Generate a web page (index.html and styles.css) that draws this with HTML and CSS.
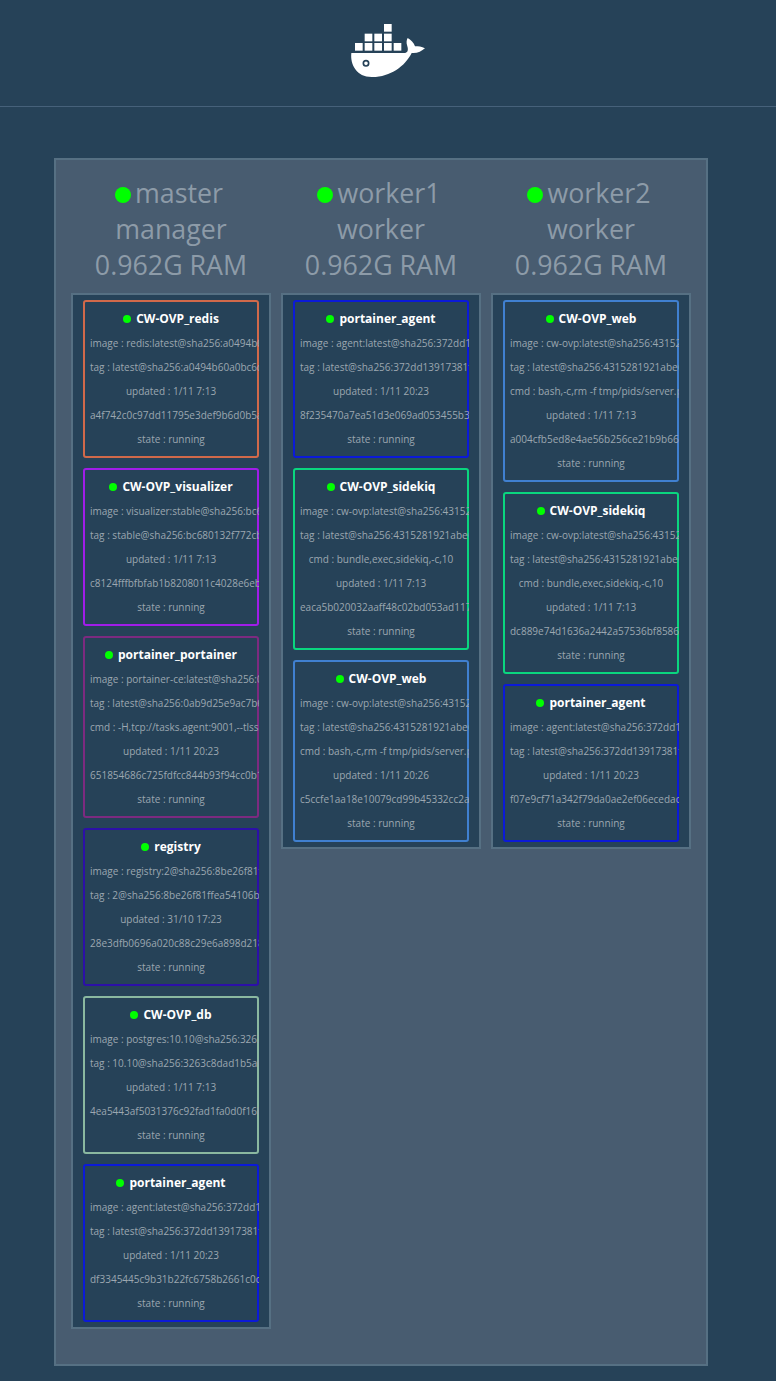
FILE: index.html
```html
<!DOCTYPE html>
<html lang="en">
<head>
    <meta charset="utf-8">
    <title>Visualizer</title>
    <link rel="stylesheet" href="styles.css">
</head>
<body>

    <!-- Logo -->
    <header class="top-bar">
        <svg class="logo" viewBox="150 70 228 165" width="76" height="55">
            <g fill="#fff">
                <rect x="252" y="73" width="23" height="23"/>
                <rect x="194" y="102" width="23" height="23"/>
                <rect x="223" y="102" width="23" height="23"/>
                <rect x="252" y="102" width="23" height="23"/>
                <rect x="165" y="130" width="23" height="23"/>
                <rect x="194" y="130" width="23" height="23"/>
                <rect x="223" y="130" width="23" height="23"/>
                <rect x="252" y="130" width="23" height="23"/>
                <rect x="281" y="130" width="23" height="23"/>
                <path d="M154 160 L316 160 C322 158 326 153 322 140 C318 128 320 120 323 115 C332 120 342 130 345 140 C355 140 365 141 375 146 C365 155 350 162 335 160 C315 200 270 233 215 232 C170 232 150 195 154 160 Z"/>
            </g>
            <circle cx="198" cy="191" r="8" fill="#fff" stroke="#264258" stroke-width="5"/>
        </svg>
    </header>

    <main class="cluster">

        <!-- master -->
        <section class="node">
            <h2 class="node-title"><span class="node-name"><span class="dot-large"></span>master</span><br>manager<br>0.962G RAM</h2>
            <ul class="service-list">
                <li class="service c-redis">
                    <div class="service-name"><span class="dot"></span>CW-OVP_redis</div>
                    <div class="service-row">image : redis:latest@sha256:a0494b60a0bc6de161d26dc</div>
                    <div class="service-row">tag : latest@sha256:a0494b60a0bc6de161d26dc2d2f9d</div>
                    <div class="service-row">updated : 1/11 7:13</div>
                    <div class="service-row">a4f742c0c97dd11795e3def9b6d0b5a8e21c4f77</div>
                    <div class="service-row">state : running</div>
                </li>
                <li class="service c-visualizer">
                    <div class="service-name"><span class="dot"></span>CW-OVP_visualizer</div>
                    <div class="service-row">image : visualizer:stable@sha256:bc680132f772cb44</div>
                    <div class="service-row">tag : stable@sha256:bc680132f772cb44d4b0d2e1f8</div>
                    <div class="service-row">updated : 1/11 7:13</div>
                    <div class="service-row">c8124fffbfbfab1b8208011c4028e6eb71d09a3c</div>
                    <div class="service-row">state : running</div>
                </li>
                <li class="service c-portainer">
                    <div class="service-name"><span class="dot"></span>portainer_portainer</div>
                    <div class="service-row">image : portainer-ce:latest@sha256:0ab9d25e9ac7b6</div>
                    <div class="service-row">tag : latest@sha256:0ab9d25e9ac7b6631d3ffa8e1c</div>
                    <div class="service-row">cmd : -H,tcp://tasks.agent:9001,--tlsskipverify</div>
                    <div class="service-row">updated : 1/11 20:23</div>
                    <div class="service-row">651854686c725fdfcc844b93f94cc0b17e20a4d1</div>
                    <div class="service-row">state : running</div>
                </li>
                <li class="service c-registry">
                    <div class="service-name"><span class="dot"></span>registry</div>
                    <div class="service-row">image : registry:2@sha256:8be26f81ffea54106bae01</div>
                    <div class="service-row">tag : 2@sha256:8be26f81ffea54106bae012c6f349df70</div>
                    <div class="service-row">updated : 31/10 17:23</div>
                    <div class="service-row">28e3dfb0696a020c88c29e6a898d2184f3b0e67a</div>
                    <div class="service-row">state : running</div>
                </li>
                <li class="service c-db">
                    <div class="service-name"><span class="dot"></span>CW-OVP_db</div>
                    <div class="service-row">image : postgres:10.10@sha256:3263c8dad1b5a0</div>
                    <div class="service-row">tag : 10.10@sha256:3263c8dad1b5a0e7f4c29b81d6</div>
                    <div class="service-row">updated : 1/11 7:13</div>
                    <div class="service-row">4ea5443af5031376c92fad1fa0d0f16b83ce27d4</div>
                    <div class="service-row">state : running</div>
                </li>
                <li class="service c-agent">
                    <div class="service-name"><span class="dot"></span>portainer_agent</div>
                    <div class="service-row">image : agent:latest@sha256:372dd13917381f</div>
                    <div class="service-row">tag : latest@sha256:372dd13917381f4a06c8d2e7</div>
                    <div class="service-row">updated : 1/11 20:23</div>
                    <div class="service-row">df3345445c9b31b22fc6758b2661c0c4ea17f98d</div>
                    <div class="service-row">state : running</div>
                </li>
            </ul>
        </section>

        <!-- worker1 -->
        <section class="node">
            <h2 class="node-title"><span class="node-name"><span class="dot-large"></span>worker1</span><br>worker<br>0.962G RAM</h2>
            <ul class="service-list">
                <li class="service c-agent">
                    <div class="service-name"><span class="dot"></span>portainer_agent</div>
                    <div class="service-row">image : agent:latest@sha256:372dd13917381f</div>
                    <div class="service-row">tag : latest@sha256:372dd13917381f4a06c8d2e7</div>
                    <div class="service-row">updated : 1/11 20:23</div>
                    <div class="service-row">8f235470a7ea51d3e069ad053455b3c81f2d97a6</div>
                    <div class="service-row">state : running</div>
                </li>
                <li class="service c-sidekiq">
                    <div class="service-name"><span class="dot"></span>CW-OVP_sidekiq</div>
                    <div class="service-row">image : cw-ovp:latest@sha256:4315281921abe6</div>
                    <div class="service-row">tag : latest@sha256:4315281921abe6d07c3f12a8</div>
                    <div class="service-row">cmd : bundle,exec,sidekiq,-c,10</div>
                    <div class="service-row">updated : 1/11 7:13</div>
                    <div class="service-row">eaca5b020032aaff48c02bd053ad1172f6e8c94b</div>
                    <div class="service-row">state : running</div>
                </li>
                <li class="service c-web">
                    <div class="service-name"><span class="dot"></span>CW-OVP_web</div>
                    <div class="service-row">image : cw-ovp:latest@sha256:4315281921abe6</div>
                    <div class="service-row">tag : latest@sha256:4315281921abe6d07c3f12a8</div>
                    <div class="service-row">cmd : bash,-c,rm -f tmp/pids/server.pid &amp;&amp; rails</div>
                    <div class="service-row">updated : 1/11 20:26</div>
                    <div class="service-row">c5ccfe1aa18e10079cd99b45332cc2a76b0d41e8</div>
                    <div class="service-row">state : running</div>
                </li>
            </ul>
        </section>

        <!-- worker2 -->
        <section class="node">
            <h2 class="node-title"><span class="node-name"><span class="dot-large"></span>worker2</span><br>worker<br>0.962G RAM</h2>
            <ul class="service-list">
                <li class="service c-web">
                    <div class="service-name"><span class="dot"></span>CW-OVP_web</div>
                    <div class="service-row">image : cw-ovp:latest@sha256:4315281921abe6</div>
                    <div class="service-row">tag : latest@sha256:4315281921abe6d07c3f12a8</div>
                    <div class="service-row">cmd : bash,-c,rm -f tmp/pids/server.pid &amp;&amp; rails</div>
                    <div class="service-row">updated : 1/11 7:13</div>
                    <div class="service-row">a004cfb5ed8e4ae56b256ce21b9b66f30d7a18c2</div>
                    <div class="service-row">state : running</div>
                </li>
                <li class="service c-sidekiq">
                    <div class="service-name"><span class="dot"></span>CW-OVP_sidekiq</div>
                    <div class="service-row">image : cw-ovp:latest@sha256:4315281921abe6</div>
                    <div class="service-row">tag : latest@sha256:4315281921abe6d07c3f12a8</div>
                    <div class="service-row">cmd : bundle,exec,sidekiq,-c,10</div>
                    <div class="service-row">updated : 1/11 7:13</div>
                    <div class="service-row">dc889e74d1636a2442a57536bf85867e03c1fa29</div>
                    <div class="service-row">state : running</div>
                </li>
                <li class="service c-agent">
                    <div class="service-name"><span class="dot"></span>portainer_agent</div>
                    <div class="service-row">image : agent:latest@sha256:372dd13917381f</div>
                    <div class="service-row">tag : latest@sha256:372dd13917381f4a06c8d2e7</div>
                    <div class="service-row">updated : 1/11 20:23</div>
                    <div class="service-row">f07e9cf71a342f79da0ae2ef06ecedac5b8d2164</div>
                    <div class="service-row">state : running</div>
                </li>
            </ul>
        </section>

    </main>

</body>
</html>
```

FILE: styles.css
```css
body {
    font-family: "Open Sans", sans-serif;
    background-color: #264258;
    margin: 0;
    padding: 0;
}

.top-bar {
    display: flex;
    justify-content: center;
    align-items: flex-start;
    box-sizing: border-box;
    height: 107px;
    padding-top: 23px;
    border-bottom: 1px solid #46617a;
}

.cluster {
    display: flex;
    align-items: flex-start;
    gap: 10px;
    box-sizing: border-box;
    width: 654px;
    margin: 51px 0 15px 54px;
    padding: 15px 15px 35px;
    background-color: #485c70;
    border: 2px solid #567083;
}

.node {
    width: 200px;
}

.node-title {
    margin: 0 0 10px;
    font-size: 26.8px;
    font-weight: 400;
    line-height: 36px;
    text-align: center;
    color: #8d9ba8;
}

.node-name {
    margin-right: 4px;
}

.dot-large {
    display: inline-block;
    width: 16px;
    height: 16px;
    margin-right: 4px;
    border-radius: 50%;
    background-color: #00ff00;
}

.service-list {
    display: flex;
    flex-direction: column;
    gap: 10px;
    margin: 0;
    padding: 5px 10px;
    list-style: none;
    background-color: #264258;
    border: 2px solid #567083;
}

.service {
    padding: 5px 0;
    border: 2px solid #fff;
    border-radius: 3px;
}

.service-name,
.service-row {
    height: 24px;
    line-height: 24px;
    text-align: center;
    white-space: nowrap;
}

.service-name {
    font-size: 12px;
    font-weight: 700;
    color: #fff;
}

.service-row {
    margin: 0 -2px;
    padding: 0 7px;
    overflow: hidden;
    font-size: 10px;
    color: #9ca7b0;
}

.dot {
    display: inline-block;
    width: 8px;
    height: 8px;
    margin-right: 5px;
    border-radius: 50%;
    background-color: #00ff00;
}

.c-redis { border-color: #d1694a; }
.c-visualizer { border-color: #a01de8; }
.c-portainer { border-color: #7d2a80; }
.c-registry { border-color: #2c10a8; }
.c-db { border-color: #8ab8a0; }
.c-agent { border-color: #0b1ad8; }
.c-sidekiq { border-color: #0ad67f; }
.c-web { border-color: #4080d0; }
```
